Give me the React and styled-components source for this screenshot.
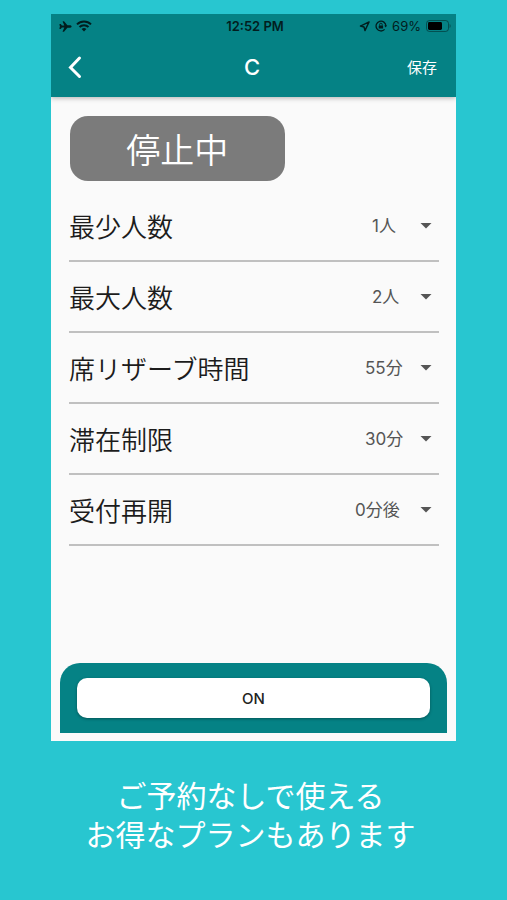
import React, { useState } from "react";

import styled, { createGlobalStyle } from "styled-components";
import { Navigation } from "lucide-react";
import { IoAirplane } from "react-icons/io5";

const GlobalStyle = createGlobalStyle`
  * {
    box-sizing: border-box;
  }

  body {
    margin: 0;
    background: #28c6d0;
    font-family: Inter, "Noto Sans CJK JP", sans-serif;
  }
`;

const Page = styled.div`
  min-height: 100vh;
  padding: 14px 51px 22px;
`;

const Phone = styled.div`
  display: flex;
  flex-direction: column;
  padding-bottom: 8px;
  background: #fafafa;
`;

const Header = styled.header`
  background: #058285;
  box-shadow: 0 1px 5px rgba(0, 0, 0, 0.3);
  clip-path: inset(0 0 -8px 0);
`;

const StatusBar = styled.div`
  display: grid;
  grid-template-columns: 1fr auto 1fr;
  align-items: center;
  height: 24px;
  padding: 0 5px 0 8px;
  color: #021d1e;
  font-size: 13px;
`;

const StatusGroup = styled.div`
  display: flex;
  align-items: center;
  justify-content: ${(props) => (props.$end ? "flex-end" : "flex-start")};
  gap: ${(props) => (props.$end ? "5px" : "4px")};
`;

const Clock = styled.span`
  font-weight: 600;
`;

const NavBar = styled.div`
  display: grid;
  grid-template-columns: 1fr auto 1fr;
  align-items: center;
  height: 59px;
  padding: 0 19px 2px 16px;
  color: #fff;
`;

const BackButton = styled.button`
  justify-self: start;
  display: flex;
  padding: 0;
  border: 0;
  background: none;
  color: inherit;
`;

const NavTitle = styled.h1`
  margin: 0;
  font-size: 22px;
  font-weight: 500;
`;

const SaveButton = styled.button`
  justify-self: end;
  padding: 0;
  border: 0;
  background: none;
  color: inherit;
  font-family: inherit;
  font-size: 15px;
`;

const Content = styled.main`
  padding: 19px 17px 117px 18px;
`;

const StatusBadge = styled.div`
  display: flex;
  align-items: center;
  justify-content: center;
  width: 58%;
  height: 65px;
  margin: 0 0 10px 1px;
  border-radius: 18px;
  background: #7b7b7b;
  color: #fff;
  font-size: 34px;
  font-weight: 350;
`;

const Row = styled.div`
  display: flex;
  align-items: center;
  justify-content: space-between;
  height: 71px;
  border-bottom: 2px solid #c0c0c0;
`;

const RowLabel = styled.label`
  color: #1c1c1c;
  font-size: 26px;
  font-weight: 350;
`;

const SelectWrap = styled.div`
  display: grid;
  align-items: center;
  color: #555;
`;

const Select = styled.select`
  grid-area: 1 / 1;
  appearance: none;
  padding: 4px 28px 4px 0;
  border: 0;
  background: none;
  color: inherit;
  font-family: inherit;
  font-size: 17px;
`;

const SelectArrow = styled.svg`
  grid-area: 1 / 1;
  justify-self: end;
  margin-right: 7px;
  pointer-events: none;
`;

const Footer = styled.footer`
  margin: 0 9px;
  padding: 15px 17px;
  border-radius: 20px 20px 0 0;
  background: #058285;
`;

const OnButton = styled.button`
  display: block;
  width: 100%;
  height: 40px;
  border: 0;
  border-radius: 10px;
  background: #fff;
  box-shadow: 0 1px 3px rgba(0, 0, 0, 0.35);
  color: #222;
  font-family: inherit;
  font-size: 15px;
  font-weight: 500;
`;

const Caption = styled.p`
  margin: 36px 0 0;
  padding-right: 6px;
  color: #fff;
  font-size: 30px;
  line-height: 39px;
  text-align: center;
  white-space: nowrap;
`;

const PEOPLE = ["1人", "2人", "3人", "4人", "5人", "20人"];
const MINUTES = ["15分", "30分", "55分", "60分", "120分"];
const RESTART = ["0分後", "5分後", "15分後", "30分後"];

const ROWS = [
  { id: "min", name: "最少人数", value: "1人", options: PEOPLE },
  { id: "max", name: "最大人数", value: "2人", options: PEOPLE },
  { id: "reserve", name: "席リザーブ時間", value: "55分", options: MINUTES },
  { id: "stay", name: "滞在制限", value: "30分", options: MINUTES },
  { id: "restart", name: "受付再開", value: "0分後", options: RESTART },
];

const WifiIcon = () => (
  <svg width="16" height="12" viewBox="0 0 16 12" fill="none">
    <path
      d="M1 4.4a10 10 0 0 1 14 0M3.5 7a6.4 6.4 0 0 1 9 0"
      stroke="currentColor"
      strokeWidth="2"
    />
    <path d="M8 11.6 5.6 9.1a3.4 3.4 0 0 1 4.8 0z" fill="currentColor" />
  </svg>
);

const RotationLockIcon = () => (
  <svg width="12" height="12" viewBox="0 0 12 12" fill="none">
    <path
      d="M9.6 9.4A4.9 4.9 0 1 1 10.9 6"
      stroke="currentColor"
      strokeWidth="1.3"
    />
    <path d="M9.2 5.4h2.8L10.7 7.6z" fill="currentColor" />
    <rect x="3.7" y="5.4" width="4.4" height="3.2" rx="0.5" fill="currentColor" />
    <path
      d="M4.6 5.6V4.5a1.3 1.3 0 0 1 2.6 0v1.1"
      stroke="currentColor"
      strokeWidth="0.9"
    />
  </svg>
);

const BatteryIcon = () => (
  <svg width="25" height="12" viewBox="0 0 25 12" fill="none">
    <rect
      x="0.5"
      y="0.5"
      width="22"
      height="11"
      rx="3"
      stroke="currentColor"
      strokeOpacity="0.5"
    />
    <rect x="2" y="2" width="14" height="8" rx="1.4" fill="#000" />
    <path d="M23.6 4v4c1.4-.6 1.4-3.4 0-4z" fill="currentColor" fillOpacity="0.5" />
  </svg>
);

const SelectRow = ({ row }) => {
  const [value, setValue] = useState(row.value);

  return (
    <Row>
      <RowLabel htmlFor={row.id}>{row.name}</RowLabel>
      <SelectWrap>
        <Select
          id={row.id}
          value={value}
          onChange={(e) => setValue(e.target.value)}
        >
          {row.options.map((option) => (
            <option key={option} value={option}>
              {option}
            </option>
          ))}
        </Select>
        <SelectArrow width="12" height="6" viewBox="0 0 12 6">
          <path d="M0.5 0h11L6 5.6z" fill="currentColor" />
        </SelectArrow>
      </SelectWrap>
    </Row>
  );
};

function App() {
  return (
    <Page>
      <GlobalStyle />
      <Phone>
        <Header>
          <StatusBar>
            <StatusGroup>
              <IoAirplane size={13} />
              <WifiIcon />
            </StatusGroup>
            <Clock>12:52 PM</Clock>
            <StatusGroup $end>
              <Navigation size={11} strokeWidth={3} />
              <RotationLockIcon />
              <span>69%</span>
              <BatteryIcon />
            </StatusGroup>
          </StatusBar>
          <NavBar>
            <BackButton type="button" aria-label="戻る">
              <svg width="16" height="24" viewBox="0 0 16 24" fill="none">
                <path
                  d="M12.5 3 3.5 12.5l9 9"
                  stroke="currentColor"
                  strokeWidth="3"
                  strokeLinecap="round"
                />
              </svg>
            </BackButton>
            <NavTitle>C</NavTitle>
            <SaveButton type="button">保存</SaveButton>
          </NavBar>
        </Header>

        <Content>
          <StatusBadge>停止中</StatusBadge>
          {ROWS.map((row) => (
            <SelectRow key={row.id} row={row} />
          ))}
        </Content>

        <Footer>
          <OnButton type="button">ON</OnButton>
        </Footer>
      </Phone>

      <Caption>
        ご予約なしで使える
        <br />
        お得なプランもあります
      </Caption>
    </Page>
  );
}
export default App;
